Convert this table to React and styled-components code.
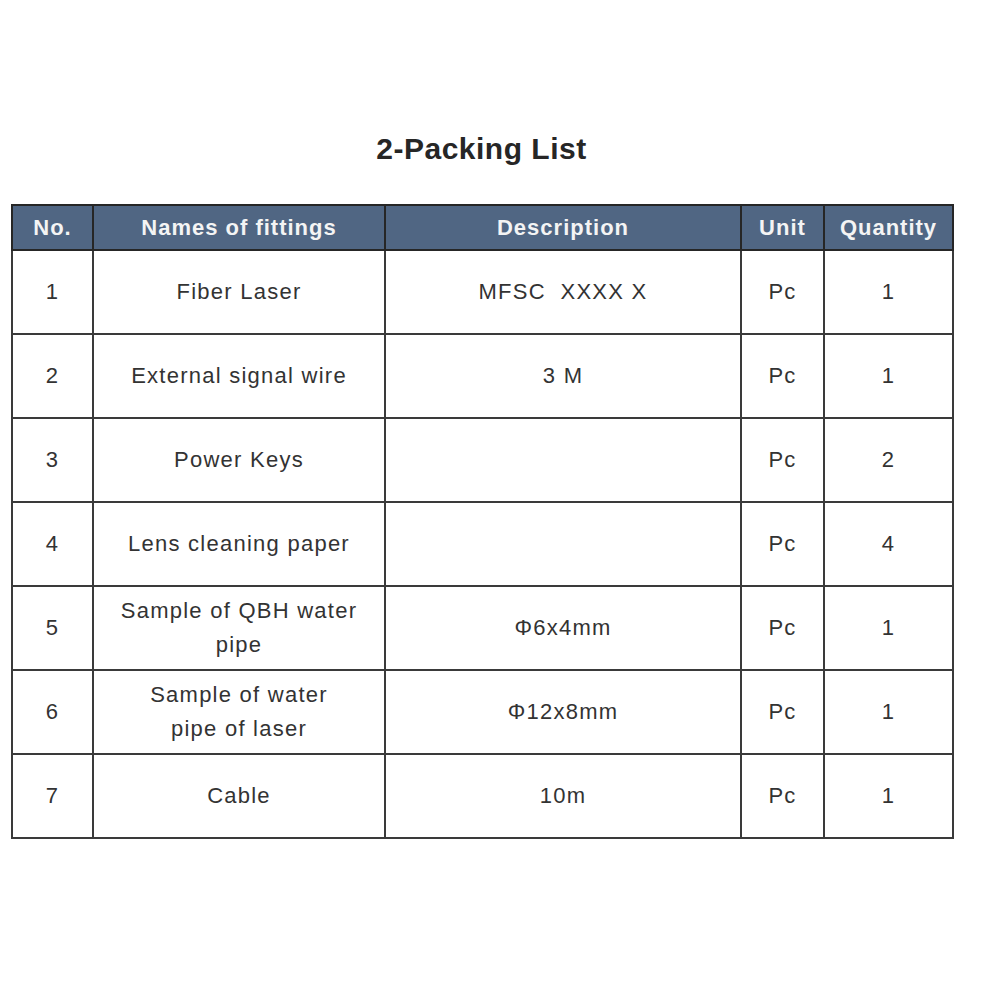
import React from 'react'
import styled, { createGlobalStyle } from 'styled-components'

const Global = createGlobalStyle`
    body {
        margin: 0;
        background: #ffffff;
        font-family: "Liberation Sans", Arial, sans-serif;
    }
`

const Page = styled.div`
    width: 1000px;
    height: 1000px;
    padding: 132px 0 0 11px;
    box-sizing: border-box;
`

const Title = styled.h2`
    width: 941px;
    margin: 0 0 38px;
    text-align: center;
    font-size: 30px;
    line-height: 34px;
    font-weight: bold;
    letter-spacing: 0.5px;
    color: #262626;
`

const Table = styled.table`
    width: 941px;
    border-collapse: collapse;
    table-layout: fixed;
    color: #333333;
`

const HeadCell = styled.th`
    height: 43px;
    padding: 0;
    background: #506683;
    color: #f4f4f4;
    font-size: 22px;
    font-weight: bold;
    letter-spacing: 1px;
    text-align: center;
    border: 2px solid #262626;
`

const Cell = styled.td`
    height: 82px;
    padding: 0;
    font-size: 22px;
    line-height: 34px;
    letter-spacing: 1.25px;
    text-align: center;
    vertical-align: middle;
    white-space: pre;
    border: 2px solid #3a3a3a;
`

const columns = [
  { label: 'No.', width: 81 },
  { label: 'Names of fittings', width: 292 },
  { label: 'Description', width: 356 },
  { label: 'Unit', width: 83 },
  { label: 'Quantity', width: 129 },
]

const rows = [
  ['1', 'Fiber Laser', 'MFSC  XXXX X', 'Pc', '1'],
  ['2', 'External signal wire', '3 M', 'Pc', '1'],
  ['3', 'Power Keys', '', 'Pc', '2'],
  ['4', 'Lens cleaning paper', '', 'Pc', '4'],
  ['5', 'Sample of QBH water\npipe', 'Φ6x4mm', 'Pc', '1'],
  ['6', 'Sample of water\npipe of laser', 'Φ12x8mm', 'Pc', '1'],
  ['7', 'Cable', '10m', 'Pc', '1'],
]

const App = () => {
  return (
    <Page>
      <Global />
      <Title>2-Packing List</Title>
      <Table>
        <colgroup>
          {columns.map(c => <col key={c.label} style={{ width: c.width }} />)}
        </colgroup>
        <thead>
          <tr>
            {columns.map(c => <HeadCell key={c.label}>{c.label}</HeadCell>)}
          </tr>
        </thead>
        <tbody>
          {rows.map(r => (
            <tr key={r[0]}>
              {r.map((v, i) => <Cell key={i}>{v}</Cell>)}
            </tr>
          ))}
        </tbody>
      </Table>
    </Page>
  )
}

export default App
